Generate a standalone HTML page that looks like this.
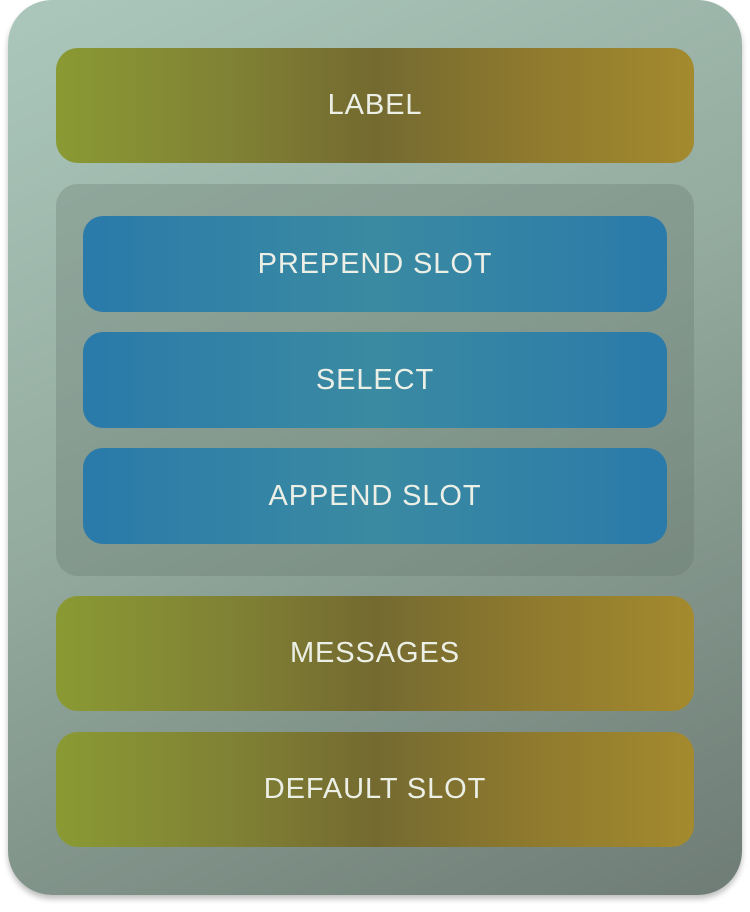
<!DOCTYPE html>
<html><head><style>
body{margin:0;width:750px;height:912px;background:#fff;position:relative;overflow:hidden;font-family:"Liberation Sans",sans-serif}
.outer{position:absolute;left:8px;top:0;width:734px;height:895px;border-radius:44px;background:linear-gradient(155deg,#abc7bc 0%,#94ab9f 45%,#6e7c75 100%);box-shadow:0 4px 6px rgba(0,0,0,.25)}
.b{position:absolute;display:flex;align-items:center;justify-content:center;color:#ecefe6;font-size:29px;letter-spacing:.9px}
.o{left:56px;width:638px;height:115px;border-radius:22px;background:linear-gradient(90deg,#8a9a33 0%,#7f7f34 30%,#746a30 50%,#8f7a2e 75%,#a48a2e 100%)}
.g{position:absolute;left:56px;top:184px;width:638px;height:392px;border-radius:22px;background:rgba(100,115,105,.3)}
.u{left:83px;width:584px;height:96px;border-radius:20px;background:linear-gradient(90deg,#2a7aaa 0%,#3a8aa2 50%,#2a7aaa 100%)}
</style></head><body>
<div class="outer"></div>
<div class="b o" style="top:48px">LABEL</div>
<div class="g"></div>
<div class="b u" style="top:216px">PREPEND SLOT</div>
<div class="b u" style="top:332px">SELECT</div>
<div class="b u" style="top:448px">APPEND SLOT</div>
<div class="b o" style="top:596px">MESSAGES</div>
<div class="b o" style="top:732px">DEFAULT SLOT</div>
</body></html>
